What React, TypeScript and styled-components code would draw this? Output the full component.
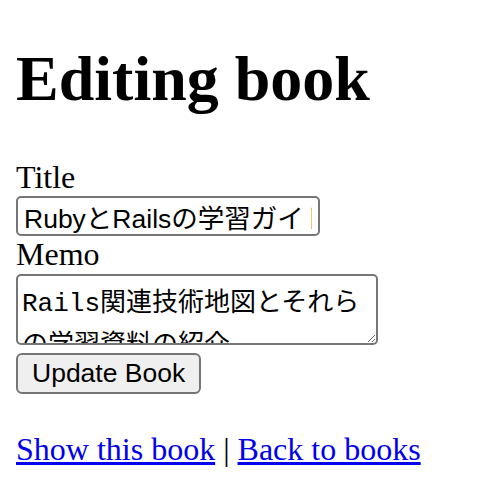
import styled, { createGlobalStyle } from "styled-components";

const GlobalStyle = createGlobalStyle`
  body {
    margin: 16px;
    font-family: "Liberation Serif", "Noto Sans CJK JP", serif;
    font-size: 32px;
    background: #ffffff;
    color: #000000;
  }
`;

const Heading = styled.h1`
  font-size: 64px;
  font-weight: bold;
  margin: 26px 0 43px;
`;

const Field = styled.div``;

const Label = styled.label`
  display: block;
`;

const TextInput = styled.input`
  font-family: "Liberation Sans", "Noto Sans CJK JP", sans-serif;
  font-size: 26.5px;
  box-sizing: border-box;
  width: 304px;
  height: 40px;
  padding: 2px 6px;
  border: 2px solid #767676;
  border-radius: 5px;
  color: #000;
  background: #fff;
`;

const TextArea = styled.textarea`
  font-family: "Liberation Mono", "Noto Sans CJK JP", monospace;
  font-size: 26px;
  line-height: 42px;
  box-sizing: border-box;
  width: 362px;
  height: 71px;
  margin: 1px 0 0;
  padding: 7px 4px 0;
  border: 2px solid #767676;
  border-radius: 5px;
  color: #000;
  background: #fff;
  overflow: hidden;
  resize: both;
`;

const SubmitButton = styled.button`
  font-family: "Liberation Sans", "Noto Sans CJK JP", sans-serif;
  font-size: 26.5px;
  box-sizing: border-box;
  height: 41px;
  padding: 0 14px;
  border: 2px solid #767676;
  border-radius: 6px;
  background: #efefef;
  color: #000;
`;

const Links = styled.div``;

const Link = styled.a`
  color: #0000ee;
  text-decoration: underline;
`;

export default function App() {
  return (
    <>
      <GlobalStyle />
      <Heading>Editing book</Heading>
      <form>
        <Field>
          <Label htmlFor="book_title">Title</Label>
          <TextInput
            id="book_title"
            type="text"
            defaultValue="RubyとRailsの学習ガイド"
          />
        </Field>
        <Field>
          <Label htmlFor="book_memo">Memo</Label>
          <TextArea
            id="book_memo"
            defaultValue="Rails関連技術地図とそれらの学習資料の紹介"
          />
        </Field>
        <Field>
          <SubmitButton type="button">Update Book</SubmitButton>
        </Field>
      </form>
      <br />
      <Links>
        <Link href="#">Show this book</Link> | <Link href="#">Back to books</Link>
      </Links>
    </>
  );
}
